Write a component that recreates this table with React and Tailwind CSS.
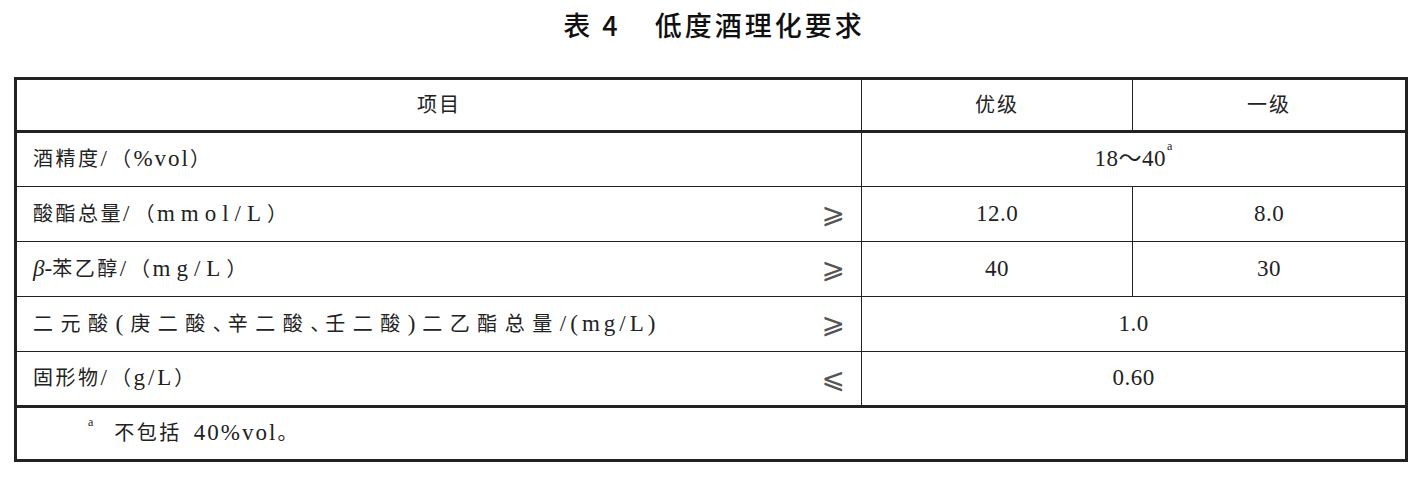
import React from 'react';

// Latin/number run, a touch larger than the CJK text (serif comes from the root stack)
function Lat({ children, t = 'tracking-[2px]' }) {
  return <span className={'text-[23px] ' + t}>{children}</span>;
}

// CJK enumeration comma squeezed to half width
function Comma() {
  return <span className="tracking-[-5px]">、</span>;
}

const rows = [
  {
    name: (
      <>
        酒精度<Lat t="tracking-[4px]">/</Lat>（<Lat t="tracking-[2px]">%vol</Lat>）
      </>
    ),
    span: '18～40',
    sup: 'a',
  },
  {
    name: (
      <>
        酸酯总量<Lat t="tracking-[5px]">/</Lat>（<Lat t="tracking-[6px]">mmol/L</Lat>）
      </>
    ),
    sign: '⩾',
    a: '12.0',
    b: '8.0',
  },
  {
    name: (
      <>
        <Lat t="tracking-[0px]"><i>β</i>-</Lat>苯乙醇<Lat t="tracking-[4px]">/</Lat>（<Lat t="tracking-[6px]">mg/L</Lat>）
      </>
    ),
    sign: '⩾',
    a: '40',
    b: '30',
  },
  {
    name: (
      <span className="tracking-[7.5px]">
        二元酸<Lat t="tracking-[7px]">(</Lat>庚二酸<Comma />辛二酸<Comma />壬二酸<Lat t="tracking-[7px]">)</Lat>二乙酯总量
        <Lat t="tracking-[4px]">/(mg/L)</Lat>
      </span>
    ),
    sign: '⩾',
    span: '1.0',
  },
  {
    name: (
      <>
        固形物<Lat t="tracking-[4px]">/</Lat>（<Lat t="tracking-[3px]">g/L</Lat>）
      </>
    ),
    sign: '⩽',
    span: '0.60',
  },
];

function NameCell({ row }) {
  return (
    <td className="border border-[#222] pl-[16px] pr-[16px]">
      <div className="flex items-center justify-between">
        <span className="tracking-[2.5px] whitespace-nowrap">{row.name}</span>
        {row.sign && (
          <span className='font-["DejaVu_Sans",sans-serif] text-[28px] leading-none text-[#555]'>{row.sign}</span>
        )}
      </div>
    </td>
  );
}

export default function App() {
  return (
    <div className='w-[1428px] h-[484px] bg-white text-[#222] font-["Liberation_Serif","Noto_Sans_CJK_SC",serif]'>
      <div className="pt-[6px] h-[77px] flex justify-center">
        <h1 className='font-["Noto_Sans_CJK_SC",sans-serif] font-medium text-[27px] leading-[38px] text-[#111] flex'>
          <span className="tracking-[3px]">表 4</span>
          <span className="ml-[34px] tracking-[3px]">低度酒理化要求</span>
        </h1>
      </div>
      <div className="ml-[14px] w-[1394px]">
        <table className="w-full table-fixed border-collapse border-[3px] border-[#222] text-[20px]">
          <colgroup>
            <col className="w-[846px]" />
            <col className="w-[271px]" />
            <col />
          </colgroup>
          <tbody>
            <tr className="h-[53px]">
              <td className="border border-b-[3px] border-[#222] text-center tracking-[2px]">项目</td>
              <td className="border border-b-[3px] border-[#222] text-center tracking-[2px]">优级</td>
              <td className="border border-b-[3px] border-[#222] text-center tracking-[2px]">一级</td>
            </tr>
            {rows.map((row, i) => (
              <tr key={i} className="h-[55px]">
                <NameCell row={row} />
                {row.span ? (
                  <td colSpan={2} className="border border-[#222] text-center">
                    <Lat t="tracking-[0.5px]">{row.span}</Lat>
                    {row.sup && <sup className="text-[12px] align-[10px] ml-[1px]">{row.sup}</sup>}
                  </td>
                ) : (
                  <>
                    <td className="border border-[#222] text-center">
                      <Lat t="tracking-[0.5px]">{row.a}</Lat>
                    </td>
                    <td className="border border-[#222] text-center">
                      <Lat t="tracking-[0.5px]">{row.b}</Lat>
                    </td>
                  </>
                )}
              </tr>
            ))}
            <tr className="h-[54px]">
              <td colSpan={3} className="border border-t-[3px] border-[#222] pl-[71px]">
                <sup className="text-[12px] align-[8px] mr-[21px]">a</sup>
                <span className="tracking-[2.5px]">不包括</span>
                <span className="ml-[12px]">
                  <Lat t="tracking-[2px]">40%vol</Lat>
                </span>
                <span>。</span>
              </td>
            </tr>
          </tbody>
        </table>
      </div>
    </div>
  );
}
